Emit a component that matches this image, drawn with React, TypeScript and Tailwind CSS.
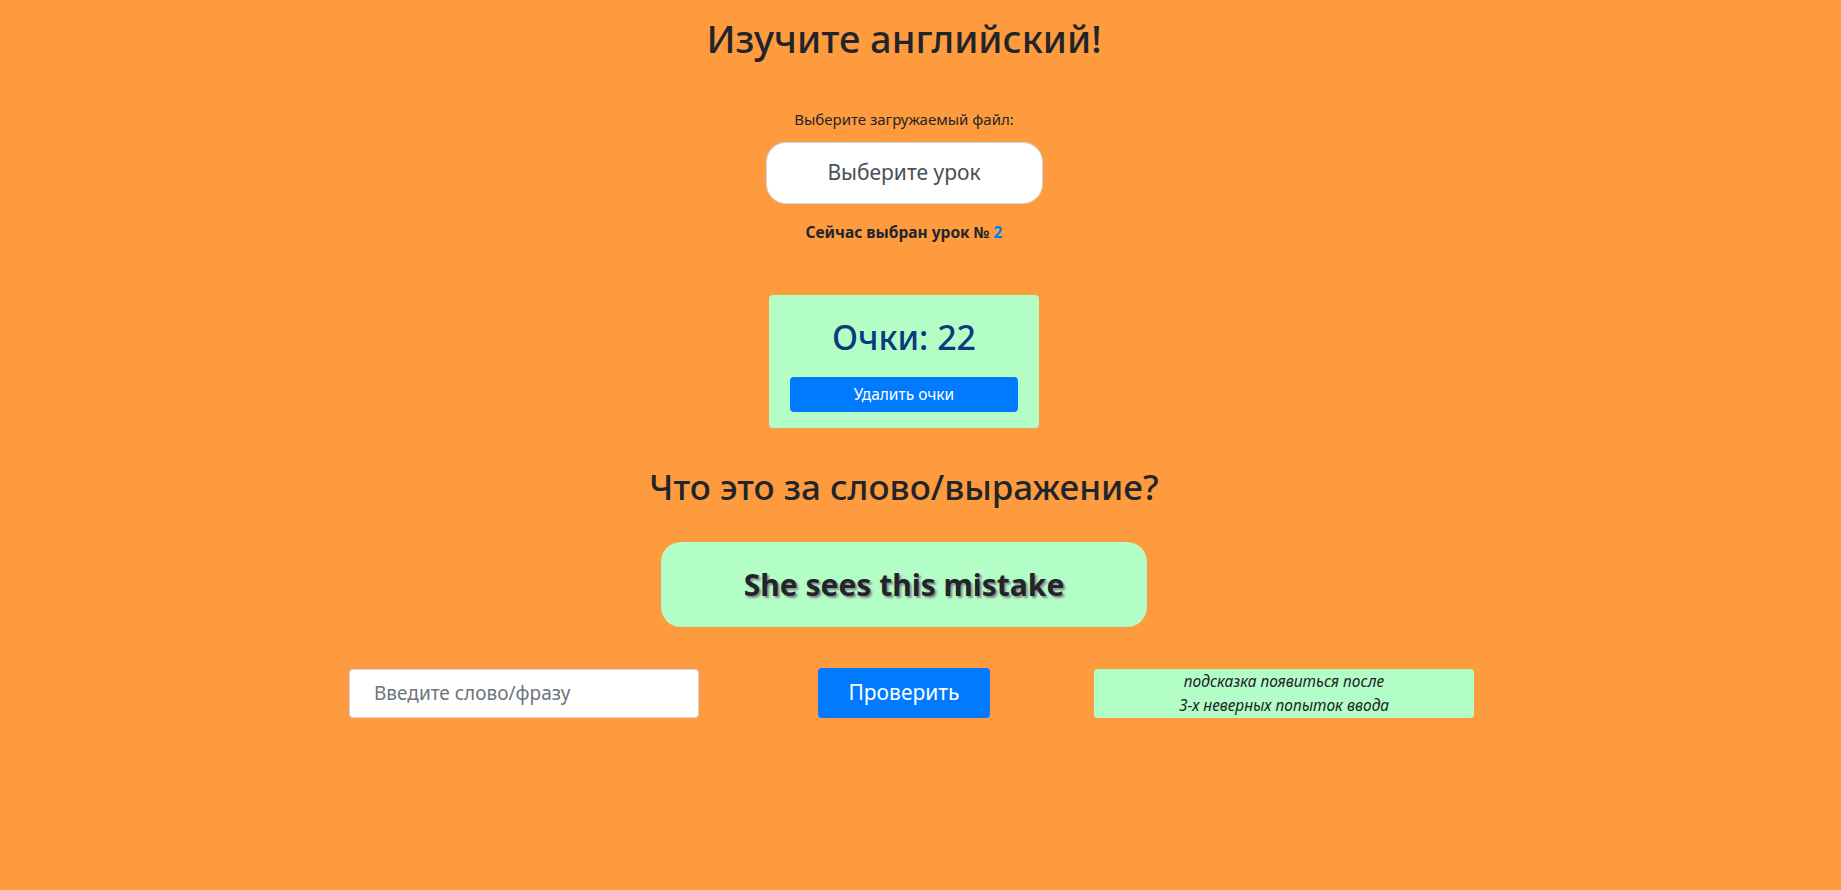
import React from "react";

export default function App() {
  const font = { fontFamily: '"Noto Sans", "Open Sans", sans-serif' };
  return (
    <div className="min-h-[890px] w-full bg-[#ff9b3f] text-[#212529]" style={font}>
      <div className="w-[1808px] flex flex-col items-center">
        <h1 className="mt-[14px] h-[48px] text-[38px] leading-[48px] font-medium">Изучите английский!</h1>
        <div className="mt-[47px] h-[20px] text-[15px] leading-[20px]">Выберите загружаемый файл:</div>
        <button className="mt-[13px] h-[62px] w-[277px] rounded-[20px] border border-[#ced4da] bg-white text-[21px] text-[#495057]">
          Выберите урок
        </button>
        <div className="mt-[18px] h-[20px] text-[15.5px] leading-[20px] font-bold">
          Сейчас выбран урок № <span className="text-[#007bff]">2</span>
        </div>
        <div className="mt-[53px] flex h-[133px] w-[270px] flex-col items-center rounded-[4px] bg-[#b3fdc6] pt-[18px]">
          <div className="h-[48px] text-[34px] leading-[48px] font-medium text-[#083c7c]">Очки: 22</div>
          <button className="mt-[16px] h-[35px] w-[228px] rounded-[4px] bg-[#007bff] text-[15.5px] text-white">Удалить очки</button>
        </div>
        <h2 className="mt-[37px] h-[44px] text-[35px] leading-[44px] font-medium">Что это за слово/выражение?</h2>
        <div className="mt-[33px] flex h-[85px] w-[486px] items-center justify-center rounded-[20px] bg-[#b3fdc6]">
          <span className="text-[30px] font-bold [text-shadow:2px_2px_2px_#8c8c8c]">She sees this mistake</span>
        </div>
        <div className="mt-[41px] flex w-[1140px] items-center">
          <div className="w-[380px] px-[15px]">
            <input
              className="h-[49px] w-[350px] rounded-[4px] border border-[#ced4da] bg-white px-[24px] text-[19px] text-[#495057] placeholder:text-[#6c757d] outline-none"
              placeholder="Введите слово/фразу"
            />
          </div>
          <div className="flex w-[380px] justify-center">
            <button className="h-[50px] w-[172px] rounded-[4px] bg-[#007bff] text-[21px] text-white">Проверить</button>
          </div>
          <div className="flex h-[49px] w-[380px] flex-col items-center justify-center rounded-[4px] bg-[#b3fdc6] pb-[1px] text-[15.5px] italic leading-[24px]">
            <div>подсказка появиться после</div>
            <div>3-х неверных попыток ввода</div>
          </div>
        </div>
      </div>
    </div>
  );
}
